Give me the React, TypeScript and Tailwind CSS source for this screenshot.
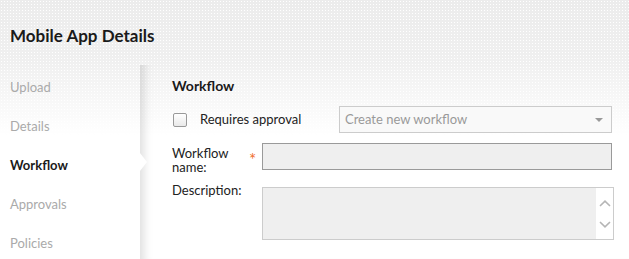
const steps = ['Upload', 'Details', 'Workflow', 'Approvals', 'Policies'];

function Chevron({ up }: { up?: boolean }) {
  return (
    <svg width="12" height="7" viewBox="0 0 12 7" fill="none" stroke="#b5b5b5" strokeWidth="1.6">
      <polyline points={up ? '1,6 6,1.2 11,6' : '1,1 6,5.8 11,1'} />
    </svg>
  );
}

export default function App() {
  return (
    <div
      className="relative w-[629px] h-[259px] overflow-hidden bg-white text-[13px] text-[#222] font-['Lato','Open_Sans',sans-serif] bg-[linear-gradient(to_bottom,rgba(255,255,255,0)_0px,rgba(255,255,255,0.2)_60px,#fff_135px),radial-gradient(#fff_0.8px,#ececec_0.8px)] bg-[length:100%_100%,3px_3px]"
    >
      {/* Header */}
      <div className="h-[65px] flex items-center px-[10px] pt-[6px]">
        <h1 className="text-[17px] font-bold text-[#1a1a1a]">Mobile App Details</h1>
      </div>

      <div className="flex h-[194px]">
        {/* Steps */}
        <div className="relative w-[140px] pt-[3px]">
          {steps.map((step) => (
            <div
              key={step}
              className={`h-[39px] flex items-center px-[10px] ${
                step === 'Workflow' ? 'font-bold text-[#1a1a1a]' : 'text-[#aaa]'
              }`}
            >
              {step}
            </div>
          ))}
        </div>

        {/* Main panel */}
        <div className="relative flex-1 pl-[32px] pr-[17px] pt-[11px] shadow-[inset_12px_0_10px_-8px_rgba(0,0,0,0.13)]">
          {/* notch marking the current step */}
          <div className="absolute left-0 top-[88px] w-0 h-0 border-y-[9px] border-y-transparent border-l-[7px] border-l-white" />

          <h2 className="font-bold text-[14px] text-[#1a1a1a] leading-[20px]">Workflow</h2>

          <div className="flex items-center mt-[10px] h-[27px]">
            <div className="w-[167px] flex items-center">
              <span className="ml-[1px] w-[14px] h-[14px] rounded-[2px] border border-[#999] bg-[linear-gradient(#fff,#e9e9e9)]" />
              <span className="ml-[13px]">Requires approval</span>
            </div>
            <div className="flex-1 h-[27px] border border-[#ccc] bg-[#f9f9f9] flex items-center justify-between pl-[5px] pr-[8px] text-[#999]">
              <span>Create new workflow</span>
              <span className="w-0 h-0 border-x-[4px] border-x-transparent border-t-[4px] border-t-[#999]" />
            </div>
          </div>

          <div className="flex mt-[10px] h-[27px]">
            <div className="w-[77px] h-[27px] pt-[3px]">
              <div className="leading-[14px]">Workflow</div>
              <div className="leading-[14px]">name:</div>
            </div>
            <span className="w-[13px] text-[#f07030] text-[17px] leading-[17px] pt-[8px]">*</span>
            <div className="flex-1 h-[27px] border border-[#9a9a9a] bg-[#efefef]" />
          </div>

          <div className="flex mt-[17px]">
            <div className="w-[90px] leading-[13px] -mt-[3px]">Description:</div>
            <div className="flex-1 h-[53px] border border-[#ccc] bg-[#efefef] flex justify-end mr-[-2px]">
              <div className="w-[17px] bg-white flex flex-col items-center justify-center gap-[14px]">
                <Chevron up />
                <Chevron />
              </div>
            </div>
          </div>
        </div>
      </div>
    </div>
  );
}
